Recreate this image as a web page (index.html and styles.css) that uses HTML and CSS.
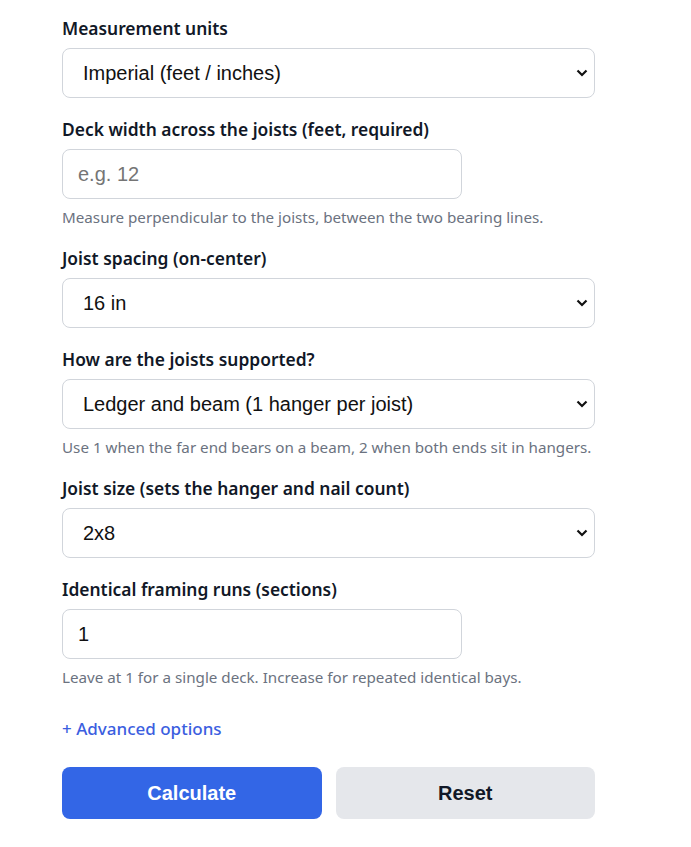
FILE: index.html
```html
<!DOCTYPE html>
<html>
<head>
<meta charset="utf-8">
<link rel="stylesheet" href="styles.css">
</head>
<body>
<form class="calc">
  <div class="field">
    <label class="label">Measurement units</label>
    <select class="control full">
      <option>Imperial (feet / inches)</option>
    </select>
  </div>
  <div class="field">
    <label class="label">Deck width across the joists (feet, required)</label>
    <input class="control half" type="text" placeholder="e.g. 12">
    <p class="help">Measure perpendicular to the joists, between the two bearing lines.</p>
  </div>
  <div class="field">
    <label class="label">Joist spacing (on-center)</label>
    <select class="control full">
      <option>16 in</option>
    </select>
  </div>
  <div class="field">
    <label class="label">How are the joists supported?</label>
    <select class="control full">
      <option>Ledger and beam (1 hanger per joist)</option>
    </select>
    <p class="help">Use 1 when the far end bears on a beam, 2 when both ends sit in hangers.</p>
  </div>
  <div class="field">
    <label class="label">Joist size (sets the hanger and nail count)</label>
    <select class="control full">
      <option>2x8</option>
    </select>
  </div>
  <div class="field">
    <label class="label">Identical framing runs (sections)</label>
    <input class="control half" type="text" value="1">
    <p class="help">Leave at 1 for a single deck. Increase for repeated identical bays.</p>
  </div>
  <a class="advanced" href="#">+ Advanced options</a>
  <div class="actions">
    <button type="button" class="btn primary">Calculate</button>
    <button type="button" class="btn secondary">Reset</button>
  </div>
</form>
</body>
</html>
```
FILE: styles.css
```css
html, body {
  margin: 0;
  padding: 0;
  background: #ffffff;
}
body {
  font-family: "Noto Sans", "Open Sans", sans-serif;
  color: #111827;
}
.calc {
  width: 533px;
  margin: 0 0 0 62px;
  padding-top: 16px;
  display: flex;
  flex-direction: column;
  gap: 19px;
}
.field {
  display: flex;
  flex-direction: column;
}
.label {
  font-size: 17.4px;
  font-weight: 600;
  line-height: 24px;
  margin-bottom: 8px;
  color: #111827;
}
.control {
  box-sizing: border-box;
  height: 50px;
  border: 1px solid #d1d5db;
  border-radius: 8px;
  background: #ffffff;
  font-family: "Liberation Sans", Arial, sans-serif;
  font-size: 20px;
  color: #111111;
  padding: 0 20px;
  margin: 0;
  outline: none;
}
.full {
  width: 533px;
  -webkit-appearance: none;
  appearance: none;
  background-image: url("data:image/svg+xml,%3Csvg xmlns='http://www.w3.org/2000/svg' width='12' height='8' viewBox='0 0 12 8'%3E%3Cpath d='M1.5 1.5l4.5 4.5 4.5-4.5' fill='none' stroke='%23111' stroke-width='2.2'/%3E%3C/svg%3E");
  background-repeat: no-repeat;
  background-position: right 6px center;
  background-size: 12px 8px;
}
.half {
  width: 400px;
  padding: 0 15px;
}
.half::placeholder {
  color: #757575;
}
.help {
  margin: 8px 0 0 0;
  font-size: 15.2px;
  line-height: 20px;
  color: #6b7280;
}
.advanced {
  margin-top: 11px;
  font-size: 17px;
  line-height: 24px;
  font-weight: 500;
  color: #3b5ee0;
  text-decoration: none;
  align-self: flex-start;
}
.actions {
  margin-top: 7px;
  display: grid;
  grid-template-columns: 1fr 1fr;
  gap: 14px;
}
.btn {
  height: 52px;
  border: none;
  border-radius: 8px;
  font-family: "Liberation Sans", Arial, sans-serif;
  font-size: 20px;
  font-weight: 700;
  cursor: pointer;
}
.primary {
  background: #3366e6;
  color: #ffffff;
}
.secondary {
  background: #e5e7eb;
  color: #111827;
}
```
